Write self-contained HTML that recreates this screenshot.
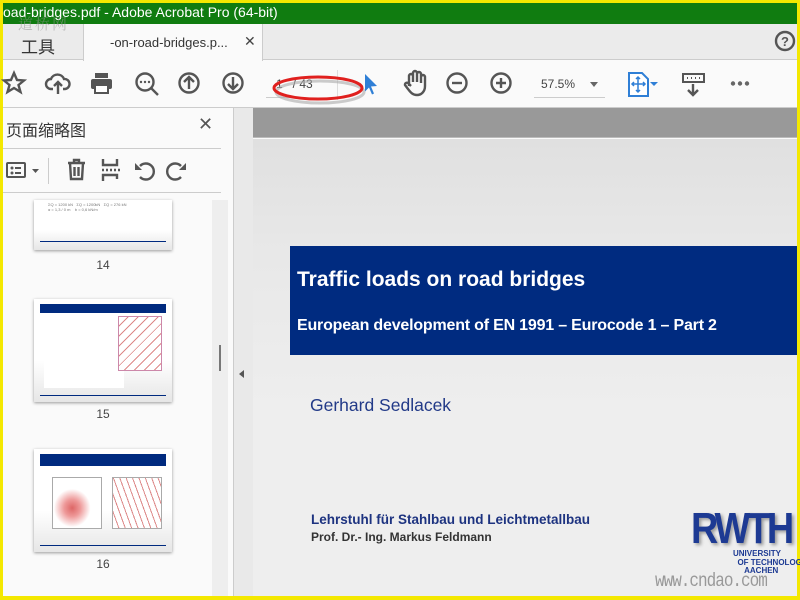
<!DOCTYPE html>
<html><head><meta charset="utf-8"><style>
*{margin:0;padding:0;box-sizing:border-box}
body{width:800px;height:600px;overflow:hidden;background:#f4e800;font-family:"Liberation Sans","Noto Sans CJK SC",sans-serif;position:relative}
.a{position:absolute;white-space:nowrap}
svg{position:absolute;overflow:visible}
.ic{fill:none;stroke:#555;stroke-width:2.4}
.thumb{position:absolute;left:34px;width:138px;height:103px;background:linear-gradient(#fff,#fff 60%,#e6e6e6);box-shadow:0 1px 3px #999}
.num{position:absolute;width:138px;left:34px;text-align:center;font-size:12px;color:#444}
</style></head><body>
<div class="a" style="left:3px;top:3px;width:794px;height:593px;background:#fafafa"></div>
<div class="a" style="left:3px;top:3px;width:794px;height:21px;background:#107c10;color:#fff;font-size:14px;line-height:19px">oad-bridges.pdf - Adobe Acrobat Pro (64-bit)</div>
<div class="a" style="left:3px;top:24px;width:794px;height:36px;background:#ebebeb;border-bottom:1px solid #ccc"></div>
<div class="a" style="left:18px;top:13px;font-size:15px;color:rgba(150,150,150,.55);letter-spacing:2px;font-family:'Noto Serif CJK SC',serif">道桥网</div>
<div class="a" style="left:21px;top:33px;font-size:17px;color:#333">工具</div>
<div class="a" style="left:83px;top:24px;width:180px;height:37px;background:#fafafa;border-left:1px solid #ccc;border-right:1px solid #ccc"></div>
<div class="a" style="left:110px;top:35px;font-size:13px;color:#333">-on-road-bridges.p...</div>
<div class="a" style="left:244px;top:33px;font-size:14px;color:#444">✕</div>
<svg style="left:775px;top:31px" width="22" height="22"><circle cx="10" cy="10" r="9" class="ic" stroke-width="1.8"/><text x="10" y="15" font-size="13" font-weight="bold" text-anchor="middle" fill="#555" font-family="Liberation Sans">?</text></svg>
<svg style="left:3px;top:72px" width="24" height="24"><path d="M11 1l3 7 7 .5-5.5 4.5 2 7-6.5-4-6.5 4 2-7L1 8.5 8 8z" class="ic" stroke-width="1.6"/></svg>
<svg style="left:46px;top:72px" width="26" height="24"><path d="M7 17H5a5 5 0 010-10 7 7 0 0113 0 5 5 0 011 10h-2M12 22V11M8 14l4-4 4 4" class="ic"/></svg>
<svg style="left:90px;top:72px" width="24" height="24"><rect x="5" y="1" width="13" height="5" fill="#555"/><rect x="1" y="7" width="21" height="10" rx="2" fill="#555"/><rect x="5" y="13" width="13" height="8" fill="#fff" stroke="#555" stroke-width="2"/></svg>
<svg style="left:135px;top:72px" width="26" height="26"><circle cx="10" cy="10" r="8.5" class="ic"/><path d="M16 16l7 7" class="ic" stroke-width="3"/><circle cx="6" cy="10" r="1.2" fill="#555"/><circle cx="10" cy="10" r="1.2" fill="#555"/><circle cx="14" cy="10" r="1.2" fill="#555"/></svg>
<svg style="left:179px;top:73px" width="22" height="22"><circle cx="10" cy="10" r="9.5" class="ic" stroke="#bbb"/><path d="M10 16V5M5 9l5-5 5 5" class="ic" stroke="#bbb"/></svg>
<svg style="left:223px;top:73px" width="22" height="22"><circle cx="10" cy="10" r="9.5" class="ic"/><path d="M10 4v11M5 11l5 5 5-5" class="ic"/></svg>
<div class="a" style="left:276px;top:77px;font-size:12px;color:#444">1&nbsp;&nbsp;&nbsp;/ 43</div>
<div class="a" style="left:266px;top:97px;width:28px;border-top:1px solid #ccc"></div>
<div class="a" style="left:337px;top:70px;height:30px;border-left:1px solid #ddd"></div>
<svg style="left:272px;top:72px" width="96" height="34"><ellipse cx="46" cy="17" rx="44" ry="11" fill="none" stroke="#aaa" stroke-width="3" transform="translate(2,3)" opacity=".6"/><ellipse cx="46" cy="16" rx="44" ry="11" fill="none" stroke="#e0201e" stroke-width="3"/></svg>
<svg style="left:363px;top:73px" width="16" height="22"><path d="M2 1l12 12-6 .5 3 7-2 1-3-7-4 4z" fill="#2f7fd6"/></svg>
<svg style="left:402px;top:70px" width="26" height="28"><path d="M7 16V6a2 2 0 014 0v6V3a2 2 0 014 0v9V4a2 2 0 014 0v9V7a2 2 0 014 0v9c0 6-4 9-8 9-4 0-6-2-9-6l-3-4a2 2 0 013-2l3 3" class="ic" stroke-width="1.6"/></svg>
<svg style="left:447px;top:73px" width="22" height="22"><circle cx="10" cy="10" r="9.5" class="ic"/><path d="M5 10h10" class="ic"/></svg>
<svg style="left:491px;top:73px" width="22" height="22"><circle cx="10" cy="10" r="9.5" class="ic"/><path d="M5 10h10M10 5v10" class="ic"/></svg>
<div class="a" style="left:541px;top:77px;font-size:12px;color:#444">57.5%</div>
<div class="a" style="left:590px;top:82px;border:4px solid transparent;border-top:5px solid #666"></div>
<div class="a" style="left:534px;top:97px;width:71px;border-top:1px solid #ccc"></div>
<svg style="left:628px;top:72px" width="32" height="26"><path d="M1 1h13l6 6v17H1z" fill="#fff" stroke="#2f7fd6" stroke-width="2"/><path d="M10 5v15M4 12h13M8 7l2-2 2 2M8 18l2 2 2-2M6 10l-2 2 2 2M15 10l2 2-2 2" stroke="#2f7fd6" stroke-width="1.5" fill="none"/><path d="M22 10h8l-4 4z" fill="#2f7fd6"/></svg>
<svg style="left:682px;top:73px" width="24" height="24"><rect x="1" y="1" width="21" height="8" fill="none" stroke="#555" stroke-width="2"/><path d="M5 5h1M9 5h1M13 5h1M17 5h1" stroke="#555" stroke-width="2"/><path d="M11 11v11M6 17l5 5 5-5" class="ic"/></svg>
<svg style="left:730px;top:80px" width="22" height="8"><circle cx="3" cy="3.5" r="2.2" fill="#666"/><circle cx="10" cy="3.5" r="2.2" fill="#666"/><circle cx="17" cy="3.5" r="2.2" fill="#666"/></svg>
<div class="a" style="left:3px;top:107px;width:794px;border-top:1px solid #ccc"></div>
<div class="a" style="left:6px;top:117px;font-size:16px;color:#333">页面缩略图</div>
<div class="a" style="left:198px;top:114px;font-size:18px;color:#555">✕</div>
<div class="a" style="left:3px;top:148px;width:218px;border-top:1px solid #ccc"></div>
<svg style="left:6px;top:160px" width="40" height="22"><rect x="1" y="3" width="18" height="14" rx="1" fill="none" stroke="#555" stroke-width="2"/><circle cx="6" cy="8" r="1.5" fill="#555"/><circle cx="6" cy="13" r="1.5" fill="#555"/><path d="M9 8h6M9 13h6" stroke="#555" stroke-width="2"/><path d="M26 9h7l-3.5 4z" fill="#555"/></svg>
<div class="a" style="left:48px;top:158px;height:26px;border-left:1px solid #ccc"></div>
<svg style="left:66px;top:158px" width="22" height="24"><path d="M2 5h17M8 5V2h5v3M4 5l1 16h11l1-16M8.5 9v9M12.5 9v9" class="ic" stroke-width="1.8"/></svg>
<svg style="left:100px;top:158px" width="22" height="24"><path d="M3 1v6h14V1M3 23v-6h14v4M2 12h2M6 12h2M10 12h2M14 12h2M18 12h2" class="ic" stroke-width="1.8"/></svg>
<svg style="left:133px;top:159px" width="24" height="24"><path d="M7 18a8 8 0 100-11" class="ic" stroke-width="2.4"/><path d="M2 4v7h7" fill="#555"/></svg>
<svg style="left:166px;top:159px" width="24" height="24"><path d="M15 18a8 8 0 110-11" class="ic" stroke-width="2.4"/><path d="M20 4v7h-7" fill="#555"/></svg>
<div class="a" style="left:3px;top:192px;width:218px;border-top:1px solid #ccc"></div>
<div class="a" style="left:212px;top:200px;width:16px;height:396px;background:#eee"></div>
<div class="a" style="left:219px;top:345px;width:2px;height:26px;background:#777"></div>
<div class="thumb" style="top:200px;height:50px"><div class="a" style="left:6px;top:41px;width:126px;border-top:1px solid #002a7f"></div><div class="a" style="left:14px;top:2px;font-size:4px;color:#777;line-height:5px">ΣQ = 1200 kN &nbsp; ΣQ = 1200kN &nbsp; ΣQ = 276 kN<br>α = 1,3 / 0 m &nbsp;&nbsp; b = 0,6 kN/m</div></div>
<div class="num" style="top:258px">14</div>
<div class="thumb" style="top:299px"><div class="a" style="left:6px;top:5px;width:126px;height:9px;background:#002a7f"></div><div class="a" style="left:10px;top:17px;width:80px;height:72px;background:#fff"></div><div class="a" style="left:84px;top:17px;width:44px;height:55px;border:1px solid #c8a;background:repeating-linear-gradient(135deg,#fff 0 6px,#d88 6px 7px)"></div><div class="a" style="left:6px;top:96px;width:126px;border-top:1px solid #002a7f"></div></div>
<div class="num" style="top:407px">15</div>
<div class="thumb" style="top:449px"><div class="a" style="left:6px;top:5px;width:126px;height:12px;background:#002a7f"></div><div class="a" style="left:18px;top:28px;width:50px;height:52px;border:1px solid #aaa;background:radial-gradient(ellipse at 40% 60%,#d66 0,#e99 20%,#fff 45%)"></div><div class="a" style="left:78px;top:28px;width:50px;height:52px;border:1px solid #aaa;background:repeating-linear-gradient(70deg,#fff 0 5px,#d88 5px 6px)"></div><div class="a" style="left:6px;top:96px;width:126px;border-top:1px solid #002a7f"></div></div>
<div class="num" style="top:557px">16</div>
<div class="a" style="left:233px;top:108px;width:20px;height:488px;background:#e9e9e9;border-left:1px solid #ccc"></div>
<div class="a" style="left:239px;top:370px;border:4px solid transparent;border-right:5px solid #555;border-left:0"></div>
<div class="a" style="left:253px;top:108px;width:544px;height:30px;background:#999;border-bottom:1px solid #bbb"></div>
<div class="a" style="left:253px;top:139px;width:544px;height:457px;background:linear-gradient(#e0e0e0,#e8e8e8 25%,#eeeeee 60%,#eeeeee)"></div>
<div class="a" style="left:290px;top:246px;width:507px;height:109px;background:#002b80"></div>
<div class="a" style="left:297px;top:268px;font-size:21px;font-weight:bold;color:#fff">Traffic loads on road bridges</div>
<div class="a" style="left:297px;top:317px;font-size:16px;font-weight:bold;color:#fff;letter-spacing:-0.2px">European development of EN 1991 – Eurocode 1 – Part 2</div>
<div class="a" style="left:310px;top:395px;font-size:17.5px;color:#223a88">Gerhard Sedlacek</div>
<div class="a" style="left:311px;top:512px;font-size:13.5px;font-weight:bold;color:#1d3380">Lehrstuhl für Stahlbau und Leichtmetallbau</div>
<div class="a" style="left:311px;top:530px;font-size:12px;font-weight:bold;color:#333">Prof. Dr.- Ing. Markus Feldmann</div>
<div class="a" style="left:691px;top:508px;font-size:36px;font-weight:bold;color:#1d3a93;letter-spacing:-3px;line-height:34px;transform:scale(1.05,1.2);transform-origin:left top;text-shadow:2px 2px 3px #999">RWTH</div>
<div class="a" style="left:733px;top:550px;font-size:8px;font-weight:bold;color:#1d3a93;line-height:8.5px">UNIVERSITY<br>&nbsp;&nbsp;OF TECHNOLOGY<br>&nbsp;&nbsp;&nbsp;&nbsp;&nbsp;AACHEN</div>
<div class="a" style="left:655px;top:572px;font-size:16px;color:#999;font-family:'Liberation Mono',monospace;letter-spacing:-1px;transform:scaleY(1.2)">www.cndao.com</div>
</body></html>
